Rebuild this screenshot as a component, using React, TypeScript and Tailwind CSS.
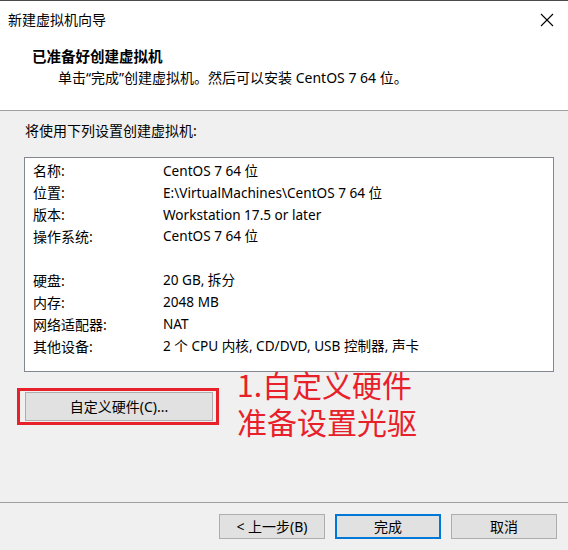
import React from "react";

const font = {
  fontFamily: '"Noto Sans", "Noto Sans CJK SC", sans-serif',
};

const rows: Array<[string, string]> = [
  ["名称:", "CentOS 7 64 位"],
  ["位置:", "E:\\VirtualMachines\\CentOS 7 64 位"],
  ["版本:", "Workstation 17.5 or later"],
  ["操作系统:", "CentOS 7 64 位"],
  ["", ""],
  ["硬盘:", "20 GB, 拆分"],
  ["内存:", "2048 MB"],
  ["网络适配器:", "NAT"],
  ["其他设备:", "2 个 CPU 内核, CD/DVD, USB 控制器, 声卡"],
];

export default function App() {
  return (
    <div
      className="relative w-[568px] h-[550px] bg-[#f0f0f0] text-[14px] text-black flex flex-col overflow-hidden"
      style={font}
    >
      {/* header */}
      <div className="h-[111px] bg-white border-t border-[#4a4a4a] border-b border-b-[#a0a0a0] flex flex-col shrink-0">
        <div className="h-[38px] flex items-center justify-between pl-[8px] pr-[14px]">
          <span className="leading-none">新建虚拟机向导</span>
          <svg width="14" height="14" viewBox="0 0 14 14" className="text-black">
            <path d="M1 1 L13 13 M13 1 L1 13" stroke="currentColor" strokeWidth="1.1" />
          </svg>
        </div>
        <div className="pl-[32px] mt-[6px] font-bold text-[14.5px] leading-[22px]">已准备好创建虚拟机</div>
        <div className="pl-[58px] leading-[22px]">
          单击“完成”创建虚拟机。然后可以安装 CentOS 7 64 位。
        </div>
      </div>

      {/* body */}
      <div className="flex-1 flex flex-col pl-[24px] pr-[14px]">
        <div className="mt-[9px] pl-[1px] leading-[22px]">将使用下列设置创建虚拟机:</div>
        <div className="mt-[15px] w-[530px] h-[215px] bg-white border border-[#828790] pt-[2px] pl-[8px]">
          {rows.map(([k, v], i) => (
            <div key={i} className="flex h-[21.9px] items-center">
              <span className="w-[130px] shrink-0">{k}</span>
              <span className="text-[13.6px]">{v}</span>
            </div>
          ))}
        </div>
        <div className="mt-[20px] pl-[1px]">
          <button className="w-[188px] h-[29px] bg-[#e1e1e1] border border-[#adadad] flex items-center justify-center">
            自定义硬件(C)...
          </button>
        </div>
      </div>

      {/* footer */}
      <div className="h-[48px] border-t border-[#a0a0a0] flex justify-end items-start pt-[11px] pr-[11px] gap-[10px] shrink-0">
        <button className="w-[106px] h-[25px] bg-[#e1e1e1] border border-[#adadad] flex items-center justify-center">
          &lt; 上一步(B)
        </button>
        <button className="w-[106px] h-[25px] bg-[#e1e1e1] border-2 border-[#0078d7] flex items-center justify-center">
          完成
        </button>
        <button className="w-[106px] h-[25px] bg-[#e1e1e1] border border-[#adadad] flex items-center justify-center">
          取消
        </button>
      </div>

      {/* annotation overlay */}
      <div className="absolute left-[17px] top-[388px] w-[202px] h-[37px] border-[3px] border-[#e8202a]" />
      <div
        className="absolute left-[237px] top-[366px] text-[#e8202a] text-[30px] leading-[37px]"
        style={{ fontFamily: '"Noto Sans CJK SC", sans-serif' }}
      >
        <div>1.自定义硬件</div>
        <div>准备设置光驱</div>
      </div>
    </div>
  );
}
